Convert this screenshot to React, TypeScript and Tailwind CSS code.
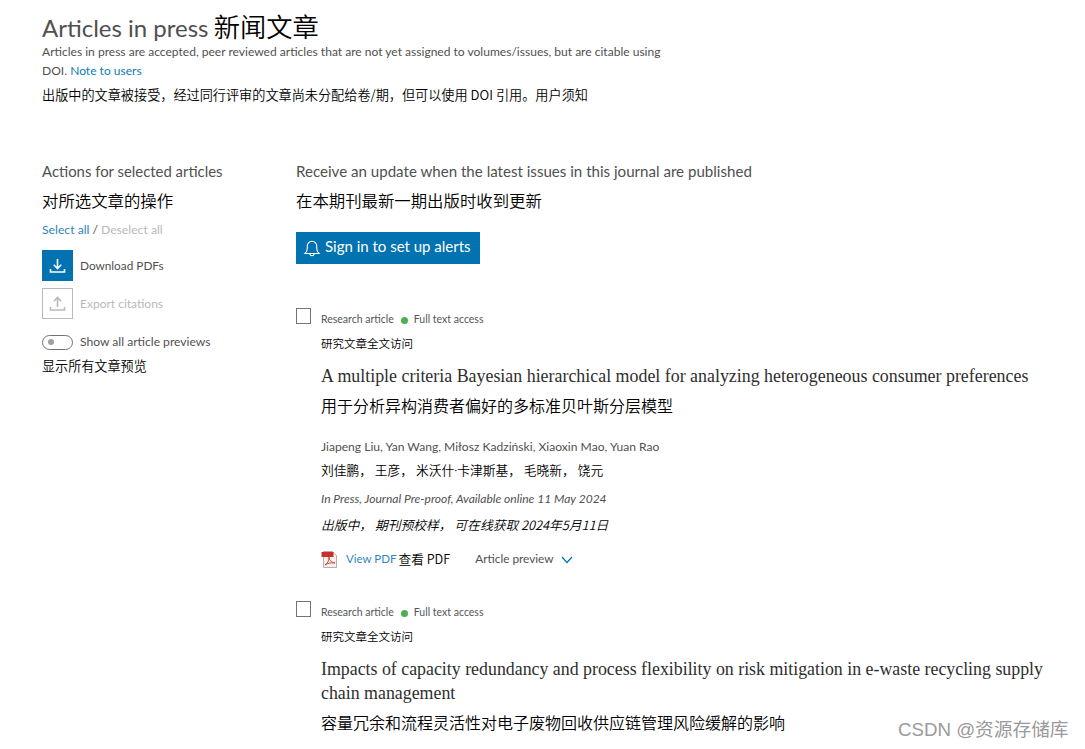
import React from "react";

const sans = "font-['Lato','Noto_Sans_CJK_SC',sans-serif]";
const cjk = "font-['Noto_Sans_CJK_SC',sans-serif] font-[350] text-black";

function PdfIcon() {
  return (
    <svg width="17" height="17" viewBox="0 0 17 17" className="shrink-0">
      <path d="M2.500 .5h9l4 4v12h-13z" fill="#f4f1ec" stroke="#b5b0aa" />
      <rect x="0.5" y="1" width="12" height="5" fill="#c9302c" />
      <path d="M4 14c3-2 4-5 4-8 0 3 2 5 6 6-4-.5-7 0-10 2z" fill="none" stroke="#d4453f" strokeWidth="1" />
    </svg>
  );
}

function Bell() {
  return (
    <svg width="18" height="18" viewBox="0 0 18 18" fill="none" stroke="#fff" strokeWidth="1.1" className="shrink-0">
      <path d="M2 14.500c1.600-1.400 2.300-3 2.300-5.500V7a4.700 4.700 0 0 1 9.400 0v2c0 2.500.7 4.100 2.300 5.500z" />
      <path d="M7 15c0 2.400 4 2.400 4 0" />
    </svg>
  );
}

function ArticleMeta() {
  return (
    <div className="flex items-start">
      <span className="h-[16px] w-[15px] shrink-0 border border-[#737373]" />
      <div className="ml-[10px] pt-[4px]">
        <div className="flex h-[16px] items-center text-[10.500px] text-[#53565a]">
          <span>Research article</span>
          <span className="ml-[7px] mr-[6px] h-[7px] w-[7px] rounded-full bg-[#4caf50]" />
          <span>Full text access</span>
        </div>
        <p className={`${cjk} mt-[6px] text-[11.500px] leading-[18px]`}>研究文章全文访问</p>
      </div>
    </div>
  );
}

export default function App() {
  return (
    <div className={`${sans} relative h-[749px] w-[1085px] overflow-hidden bg-white text-[#505050]`}>
      <div className="pl-[42px] pt-[11px]">
        <h1 className="h-[30px] text-[24px] leading-[30px] text-[#505050]">
          Articles in press <span className={`${cjk} -ml-[1px] text-[26.300px]`}>新闻文章</span>
        </h1>
        <p className="mt-[1px] w-[630px] text-[12.050px] leading-[19px]">
          Articles in press are accepted, peer reviewed articles that are not yet assigned to volumes/issues, but are citable using DOI.{" "}
          <span className="text-[#0c7dbb]">Note to users</span>
        </p>
        <p className={`${cjk} mt-[6px] text-[13.150px] leading-[18px]`}>出版中的文章被接受，经过同行评审的文章尚未分配给卷/期，但可以使用 DOI 引用。用户须知</p>
      </div>

      <div className="flex pl-[42px] pt-[57px]">
        <aside className="w-[254px] shrink-0">
          <p className="text-[14.900px] leading-[20px]">Actions for selected articles</p>
          <p className={`${cjk} mt-[8px] text-[16.400px] leading-[22px]`}>对所选文章的操作</p>
          <p className="mt-[11px] text-[12.200px] leading-[16px]">
            <span className="text-[#2f86bd]">Select all</span>
            <span className="ml-[3px]">/</span>
            <span className="ml-[3px] text-[#b9b9b9]">Deselect all</span>
          </p>
          <div className="mt-[12px] flex items-center gap-[7px]">
            <span className="flex h-[31px] w-[31px] items-center justify-center bg-[#0272b1]">
              <svg width="17" height="16" viewBox="0 0 17 16" fill="none" stroke="#fff" strokeWidth="1.6">
                <path d="M8.500 1v9M4.800 6.800l3.700 3.700 3.700-3.700M1.500 11v3h14v-3" />
              </svg>
            </span>
            <span className="text-[11.800px]">Download PDFs</span>
          </div>
          <div className="mt-[7px] flex items-center gap-[7px]">
            <span className="flex h-[31px] w-[31px] items-center justify-center border border-[#b9b9b9]">
              <svg width="17" height="16" viewBox="0 0 17 16" fill="none" stroke="#b9b9b9" strokeWidth="1.6">
                <path d="M8.500 11V2M4.800 5.200l3.700-3.700 3.700 3.700M1.500 11v3h14v-3" />
              </svg>
            </span>
            <span className="text-[12px] text-[#b9b9b9]">Export citations</span>
          </div>
          <div className="mt-[14px] flex items-center gap-[7px]">
            <span className="flex h-[15px] w-[31px] items-center rounded-full border border-[#737373] pl-[5px]">
              <span className="h-[6px] w-[6px] rounded-full bg-[#a0a0a0]" />
            </span>
            <span className="text-[12.100px]">Show all article previews</span>
          </div>
          <p className={`${cjk} mt-[6px] text-[13.100px] leading-[18px]`}>显示所有文章预览</p>
        </aside>

        <main className="min-w-0 flex-1">
          <p className="text-[15.100px] leading-[20px]">Receive an update when the latest issues in this journal are published</p>
          <p className={`${cjk} mt-[8px] text-[16.400px] leading-[22px]`}>在本期刊最新一期出版时收到更新</p>
          <div className="mt-[21px] flex h-[32px] w-[184px] items-center gap-[4px] bg-[#0272b1] pl-[7px] text-[15px] text-white">
            <Bell />
            <span className="mb-[3px]">Sign in to set up alerts</span>
          </div>

          <section className="mt-[44px]">
            <ArticleMeta />
            <div className="pl-[25px]">
              <h2 className="mt-[12px] font-['Liberation_Serif',serif] text-[17.900px] leading-[24px] text-[#2e2e2e]">
                A multiple criteria Bayesian hierarchical model for analyzing heterogeneous consumer preferences
              </h2>
              <p className={`${cjk} mt-[5px] text-[16px] leading-[24px]`}>用于分析异构消费者偏好的多标准贝叶斯分层模型</p>
              <p className="mt-[22px] text-[12.100px] leading-[16px]">Jiapeng Liu, Yan Wang, Miłosz Kadziński, Xiaoxin Mao, Yuan Rao</p>
              <p className={`${cjk} mt-[6px] text-[12.750px] leading-[18px]`}>
                刘佳鹏， 王彦， 米沃什<span className={sans}>·</span>卡津斯基， 毛晓新， 饶元
              </p>
              <p className="mt-[12px] text-[12.050px] italic leading-[16px]">In Press, Journal Pre-proof, Available online 11 May 2024</p>
              <p className={`${cjk} mt-[9px] text-[12.770px] italic leading-[18px]`}>出版中， 期刊预校样， 可在线获取 2024年5月11日</p>
              <div className="mt-[15px] flex h-[20px] items-center">
                <PdfIcon />
                <span className="ml-[8px] text-[11.500px] text-[#2f86bd]">View PDF</span>
                <span className={`${cjk} ml-[2px] text-[12.700px]`}>查看 PDF</span>
                <span className="ml-[25px] text-[11.800px]">Article preview</span>
                <svg width="12" height="8" viewBox="0 0 12 8" fill="none" stroke="#0272b1" strokeWidth="1.2" className="ml-[7px] mt-[2px]">
                  <path d="M1 1l5 5.500L11 1" />
                </svg>
              </div>
            </div>
          </section>

          <section className="mt-[32px]">
            <ArticleMeta />
            <div className="pl-[25px]">
              <h2 className="mt-[12px] w-[740px] font-['Liberation_Serif',serif] text-[17.850px] leading-[24px] text-[#2e2e2e]">
                Impacts of capacity redundancy and process flexibility on risk mitigation in e-waste recycling supply chain management
              </h2>
              <p className={`${cjk} mt-[5px] text-[16px] leading-[24px]`}>容量冗余和流程灵活性对电子废物回收供应链管理风险缓解的影响</p>
            </div>
          </section>
        </main>
      </div>

      <span className="absolute left-[898px] top-[718px] font-['Liberation_Sans','Noto_Sans_CJK_SC',sans-serif] text-[18.700px] leading-[24px] text-[#9a9a9a]">
        CSDN @资源存储库
      </span>
    </div>
  );
}
